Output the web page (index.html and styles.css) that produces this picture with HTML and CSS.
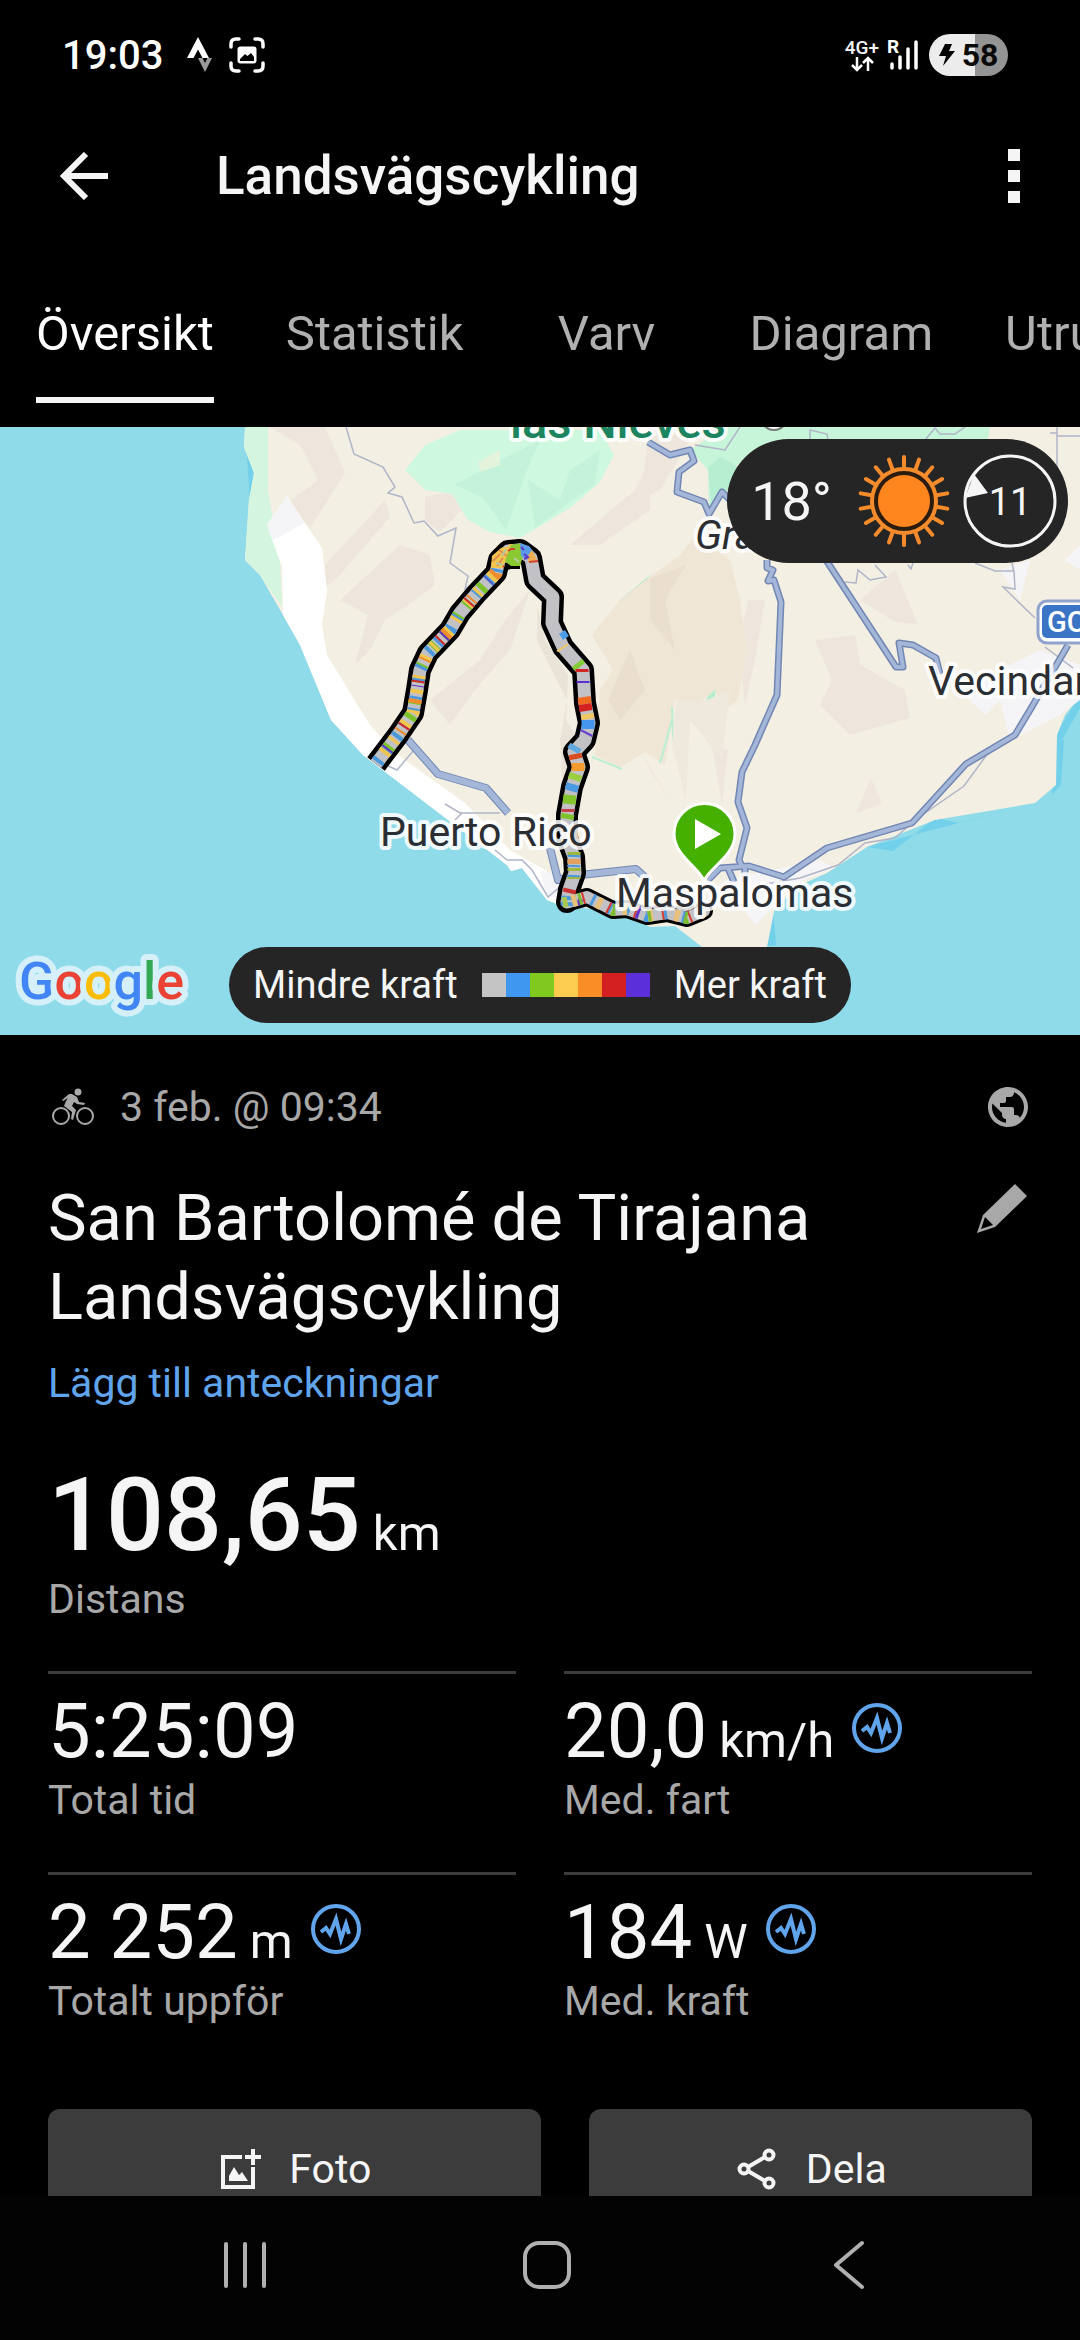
FILE: index.html
```html
<!DOCTYPE html>
<html lang="sv">
<head>
    <meta charset="UTF-8">
    <meta name="viewport" content="width=device-width, initial-scale=1.0">
    <title>Landsvägscykling</title>
    <link rel="stylesheet" href="styles.css">
</head>
<body>
    <div class="status-bar">
        <div class="status-left">
            <span class="clock">19:03</span>
            <svg width="26" height="36" viewBox="0 0 26 36">
                <path d="M11 0 L22 21 H15.500 L11 12.500 L6.500 21 H0 Z" fill="#fff"/>
                <path d="M11 21 H15.500 L18 26 L20.500 21 H25 L18 35 Z" fill="#999"/>
            </svg>
            <svg class="capture-icon" width="36" height="36" viewBox="0 0 36 36">
                <path d="M2 10 V7 Q2 2 7 2 H10 M26 2 H29 Q34 2 34 7 V10 M34 26 V29 Q34 34 29 34 H26 M10 34 H7 Q2 34 2 29 V26" fill="none" stroke="#fff" stroke-width="3.500" stroke-linecap="round"/>
                <rect x="8.500" y="9.500" width="19" height="17" rx="3" fill="#fff"/>
                <path d="M11 24 V22 L16 17 L18.500 19 L22 16 L25 20 V24 Z" fill="#000"/>
            </svg>
        </div>
        <div class="status-right">
            <div class="network">
                <span>4G+</span>
                <svg width="24" height="16" viewBox="0 0 24 16">
                    <path d="M7 1 V14 M2 9 L7 14 L12 9 M18 15 V2 M13 7 L18 2 L23 7" fill="none" stroke="#fff" stroke-width="2.500"/>
                </svg>
            </div>
            <svg class="signal" width="32" height="32" viewBox="0 0 32 32">
                <text x="0" y="14" class="roaming">R</text>
                <path d="M5 25 V29 M13 18 V29 M21 10 V29 M29 3 V29" stroke="#fff" stroke-width="3.500" stroke-linecap="round"/>
            </svg>
            <div class="battery">
                <svg width="16" height="22" viewBox="0 0 16 22">
                    <path d="M6 0 H13 L10 7 H16 L4 22 L7 12 H0 Z" fill="#000"/>
                </svg>
                <span>58</span>
            </div>
        </div>
    </div>

    <header class="app-bar">
        <button class="icon-button" aria-label="Tillbaka">
            <svg width="48" height="48" viewBox="0 0 48 48">
                <path d="M48 24 H4 M26 2 L4 24 L26 46" fill="none" stroke="#f5f5f5" stroke-width="6"/>
            </svg>
        </button>
        <h1>Landsvägscykling</h1>
        <button class="icon-button" aria-label="Mer">
            <svg width="12" height="54" viewBox="0 0 12 54" fill="#f5f5f5">
                <rect width="12" height="12"/>
                <rect y="21" width="12" height="12"/>
                <rect y="42" width="12" height="12"/>
            </svg>
        </button>
    </header>

    <nav class="tabs">
        <a href="#oversikt" class="active">Översikt</a>
        <a href="#statistik">Statistik</a>
        <a href="#varv">Varv</a>
        <a href="#diagram">Diagram</a>
        <a href="#utrustning">Utrustning</a>
    </nav>

    <main>
        <section class="map">
            <svg class="map-canvas" viewBox="0 427 1080 608">
                <defs>
                    <path id="climb" d="M376 764 L398 735 L413 713 L417 690 L420 670 L428 653 L450 630 L460 613 L477 593 L496 573 L499 560 L508 551 L520 550"/>
                    <path id="descent" d="M520 550 L531 558 L535 580 L553 597 L552 623 L563 647 L583 670 L585 703 L589 723 L585 740 L574 752 L579 767 L572 787 L567 815 L567 838 L574 857 L575 873 L569 890 L567 902"/>
                    <path id="coast" d="M569 902 L587 897 L613 910 L627 909 L647 916 L667 913 L687 918 L704 911"/>
                </defs>
                <rect y="427" width="1080" height="608" fill="#8fdbea"/>

                <!-- shallow water -->
                <path d="M246 440 L255 470 L250 505 Z M867 847 L893 851 L935 818 L960 823 L1035 803 Z M1056 740 H1064 L1061 785 L1052 795 Z M773 905 L776 945 L767 946 Z M1080 695 L1052 740 H1062 L1080 708 Z" fill="#72d0ea"/>

                <!-- island -->
                <path d="M245 427 L244 447 L254 473 L249 500 L245 560 L260 575 L283 615 L300 645 L331 720 L363 755 L507 865 L511 871 L522 868 L547 900 L560 905 L625 913 L650 927 L675 926 L702 947 H767 L775 907 L807 882 L827 873 L867 847 L935 820 L1035 803 L1056 785 L1057 735 L1065 715 L1077 700 L1080 699 V427 Z" fill="#f4efe3"/>

                <!-- hill shading -->
                <g fill="#ede5dc" opacity="0.8">
                    <path d="M270 427 H325 L345 473 L310 528 L285 505 L318 480 L300 445 Z"/>
                    <path d="M325 565 L385 500 L390 517 L340 575 L322 590 Z"/>
                    <path d="M340 600 L400 545 L430 555 L435 585 L415 600 L385 620 L370 650 L355 665 L368 615 Z"/>
                    <path d="M425 497 L450 492 L462 510 L440 532 L425 520 Z"/>
                    <path d="M570 545 L635 490 L650 460 V510 L600 545 Z"/>
                    <path d="M430 700 L480 660 L505 620 L530 590 L510 650 L475 690 L450 725 Z"/>
                    <path d="M815 640 L855 635 L860 665 L905 690 L910 718 L850 735 L820 705 L832 680 Z"/>
                    <path d="M860 600 L895 570 L918 624 L895 622 Z"/>
                    <path d="M856 813 L871 778 L882 804 Z"/>
                    <path d="M748 600 L765 600 L755 660 L745 705 L738 650 Z"/>
                    <path d="M640 750 L670 800 L650 770 Z M712 745 L728 750 L722 805 Z"/>
                    <path d="M650 427 L690 440 L660 490 L640 500 Z"/>
                </g>
                <path d="M537 605 L545 640 L568 675 L566 720 L578 740 L565 830 L560 740 L567 700 L537 640 Z" fill="#e9e3d8"/>

                <!-- parks and forest -->
                <path d="M245 427 H268 L268 490 L280 560 L282 607 L260 575 L245 560 L249 500 L254 473 L244 447 Z" fill="#d4f6e0"/>
                <path d="M405 470 L425 445 L460 430 H600 L614 455 L600 482 L570 508 L520 538 L490 532 L468 520 L452 494 L425 490 Z" fill="#cff8e1"/>
                <path d="M455 485 L500 460 L540 440 L525 475 L506 530 L483 498 Z M528 480 L560 500 L570 470 L600 450 L595 484 L535 528 Z" fill="#bdeed6" opacity="0.6"/>
                <path d="M478 462 L500 450 L500 465 L480 472 Z" fill="#e4f3dc"/>
                <path d="M690 450 L725 427 H990 L985 455 L730 465 L725 490 L709 510 L708 470 Z" fill="#c6f5da"/>
                <path d="M708 468 L720 457 L745 470 L726 492 L712 512 Z" fill="#b7edd0"/>
                <path d="M620 600 L650 575 L640 592 L615 610 L600 640 Z M670 695 L690 688 L692 693 L672 697 Z M706 700 L717 680 L714 706 Z" fill="#b5edce"/>
                <path d="M600 625 L620 600 L652 575 L680 555 L695 536 L730 560 L740 600 L747 650 L738 700 L725 710 L715 690 L700 703 L675 700 L665 765 L645 752 L620 768 L595 755 L600 690 L613 670 L592 635 Z" fill="#f0e6d6"/>
                <path d="M650 578 L686 565 L665 600 L675 650 L650 620 Z M608 700 L630 650 L645 690 L620 720 Z" fill="#eadfce"/>
                <path d="M592 757 L622 769 M672 707 L673 740 M660 763 L672 720" stroke="#b9efd2" stroke-width="2" fill="none"/>
                <path d="M676 700 L700 703 L730 690 L722 760 L690 720 L686 800 L672 745 Z" fill="#efe8dd"/>

                <!-- towns -->
                <path d="M287 496 L322 548 L327 590 L322 625 L327 655 L370 725 L398 755 L465 803 L510 850 L545 870 L575 895 L560 905 L547 900 L522 868 L511 871 L507 865 L363 755 L331 720 L300 645 L283 615 L282 567 L267 525 Z" fill="#fff"/>
                <path d="M287 496 L305 523 L273 540 L267 525 Z M540 870 L575 880 L570 900 L547 896 Z" fill="#f5f5f8"/>
                <path d="M725 880 L820 860 L835 868 L790 885 L775 905 L756 925 L740 905 Z M960 690 L1040 650 L1080 665 V700 L1060 715 L1010 740 L1000 700 L985 715 Z M1065 560 L1080 545 V570 Z M1000 570 L1030 560 L1020 600 Z" fill="#f5f4f6"/>

                <!-- minor roads -->
                <g fill="none" stroke="#b0b5c8" stroke-width="1.500">
                    <path d="M346 427 L354 454 L383 467 L395 487 L388 493 L402 497 L414 523 L424 521 L438 536 L456 528 L450 563 L468 576 L465 589 L474 584"/>
                    <path d="M414 750 L397 770 L388 766 M445 804 L460 813 H500 M462 813 L455 820 M495 850 L507 860 H522 L532 870 L548 897 L562 885"/>
                    <path d="M740 427 L725 450 L695 445 M810 440 V430 L827 434 L829 446 M925 440 L935 428 L940 434 H955 L965 427 M1057 427 V475 M1050 433 H1057 M1057 436 H1080"/>
                    <path d="M845 582 L856 583 L858 570 L870 580 L886 577 L875 565 M908 565 L911 569 L913 563 M975 563 L995 571 H1014 L1015 589 L1003 587 L1035 618 M1012 563 L1014 572 M1045 647 L1073 668"/>
                    <path d="M766 884 L800 878 L838 865 L865 843 L895 838 L915 820 L964 786 L988 753"/>
                </g>

                <!-- main roads -->
                <g fill="none" stroke="#7187b3" stroke-width="7" stroke-linejoin="round">
                    <path d="M648 442 L670 455 L690 450 L694 461 L679 472 L677 492 L704 502 L709 514 L722 492 L730 500"/>
                    <path d="M767 560 V568 L773 570 L768 581 L774 580 L781 602 L777 695 L755 745 L742 772 L738 802 L747 828 L739 860 L742 866"/>
                    <path d="M826 560 L896 667 L903 667 L899 643 L913 645 L936 658 L940 674"/>
                    <path d="M1068 645 L1030 710 L1015 735 L966 764 L912 823 L827 848 L784 877 L749 866 L720 868 L708 880"/>
                    <path d="M728 868 L734 882 M745 866 V882"/>
                    <path d="M408 740 L438 774 L486 788 L508 813" stroke-width="8"/>
                    <path d="M550 848 L558 880 L580 875 L636 869 L648 880" stroke-width="8"/>
                </g>
                <g fill="none" stroke="#a5b7d8" stroke-width="4" stroke-linejoin="round">
                    <path d="M648 442 L670 455 L690 450 L694 461 L679 472 L677 492 L704 502 L709 514 L722 492 L730 500"/>
                    <path d="M767 560 V568 L773 570 L768 581 L774 580 L781 602 L777 695 L755 745 L742 772 L738 802 L747 828 L739 860 L742 866"/>
                    <path d="M826 560 L896 667 L903 667 L899 643 L913 645 L936 658 L940 674"/>
                    <path d="M1068 645 L1030 710 L1015 735 L966 764 L912 823 L827 848 L784 877 L749 866 L720 868 L708 880"/>
                    <path d="M728 868 L734 882 M745 866 V882"/>
                    <path d="M408 740 L438 774 L486 788 L508 813" stroke-width="6"/>
                    <path d="M550 848 L558 880 L580 875 L636 869 L648 880" stroke-width="6"/>
                </g>

                <!-- route coloured by power -->
                <g fill="none" stroke="#000" stroke-width="22" stroke-linejoin="round">
                    <use href="#climb"/>
                    <use href="#descent" stroke-linecap="round"/>
                    <use href="#coast" stroke-width="18" stroke-linecap="round"/>
                    <path d="M502 562 L510 560 L520 560" stroke-width="18"/>
                </g>
                <g fill="none" stroke="#c2c2c6" stroke-width="13" stroke-linejoin="round">
                    <use href="#climb"/>
                    <use href="#descent" stroke-linecap="round"/>
                    <use href="#coast" stroke-width="12" stroke-linecap="round"/>
                </g>
                <g fill="none" stroke-width="13" stroke-linejoin="round">
                    <use href="#climb" stroke="#7cc22a" stroke-dasharray="5 11 3 19" stroke-dashoffset="-18"/>
                    <use href="#climb" stroke="#4c98dc" stroke-dasharray="4 9 3 15" stroke-dashoffset="-2"/>
                    <use href="#climb" stroke="#f0c64e" stroke-dasharray="3 17 4 11" stroke-dashoffset="-28"/>
                    <use href="#climb" stroke="#f08c2c" stroke-dasharray="2 31 4 40" stroke-dashoffset="-40"/>
                    <use href="#climb" stroke="#d02828" stroke-dasharray="2 46" stroke-dashoffset="-46"/>
                    <use href="#climb" stroke="#6035c0" stroke-dasharray="1 57 2 70" stroke-dashoffset="-90"/>
                </g>
                <!-- switchbacks at the turning point -->
                <path d="M491 568 L492 556 L501 548 L512 546 L514 566 L505 562 L502 568 Z" fill="#f2c64a"/>
                <path d="M511 545 L521 543 L523 556 L520 566 L511 566 L505 561 Z" fill="#8ac932"/>
                <path d="M520 543 L529 546 L534 552 L527 560 L521 556 Z" fill="#5a9be6"/>
                <path d="M532 550 L538 562 L529 563 L527 557 Z" fill="#efaf50"/>
                <path d="M493 561 L500 554 M497 566 L503 558 M499 550 L507 556" stroke="#e08b58" stroke-width="2" fill="none"/>
                <path d="M496 563 L503 565 M506 549 L502 556 M514 558 L519 562" stroke="#b8c8a0" stroke-width="2" fill="none"/>
                <path d="M508 551 L511 549 L515 549 M529 562 L538 561" stroke="#d04438" stroke-width="2" fill="none"/>
                <path d="M524 554 L528 557 L524 559 M521 547 L524 550" stroke="#6035c0" stroke-width="2" fill="none"/>
                <g fill="none" stroke-width="13">
                    <path d="M562 632 L566 638" stroke="#4c9ce8" stroke-width="7"/>
                    <path d="M562 647 L568 656" stroke="#efc766" stroke-dasharray="2 20"/>
                    <path d="M577 663 L580 667" stroke="#84cc38"/>
                    <path d="M582 669 V672" stroke="#d42828"/>
                    <path d="M583 681 V683" stroke="#5c30d0"/>
                    <path d="M584 697 L585 704" stroke="#f06a20"/>
                    <path d="M585 704 L586 711" stroke="#d42222"/>
                    <path d="M587 714 L588 719" stroke="#f0c660"/>
                    <path d="M588 720 V729" stroke="#4497ec"/>
                    <path d="M587 732 L586 734" stroke="#6a40d0"/>
                    <path d="M576 746 L573 751" stroke="#62a8e0"/>
                    <path d="M575 754 L576 759" stroke="#d84c20"/>
                    <path d="M578 763 L578 771" stroke="#f59a2c"/>
                    <path d="M576 774 L574 780" stroke="#9cce40"/>
                    <path d="M573 784 L571 791" stroke="#4c9be2"/>
                    <path d="M570 795 L569 804" stroke="#84c42c"/>
                    <path d="M568 809 L568 812" stroke="#c8404c"/>
                    <path d="M568 814 L567 819" stroke="#7fc32c"/>
                    <path d="M574 852 L574 884" stroke="#a0b840" stroke-dasharray="3 5"/>
                    <path d="M574 855 L573 883" stroke="#4c98dc" stroke-dasharray="2 8"/>
                    <path d="M574 859 L574 864" stroke="#e4a060"/>
                    <path d="M570 889 L569 893" stroke="#cc3030"/>
                    <path d="M568 896 L567 907" stroke="#4c98dc" stroke-dasharray="4 2"/>
                    <path d="M564 897 L566 907" stroke="#a8c850" stroke-width="5"/>
                    <path d="M578 905 L581 899" stroke="#6035c8" stroke-width="5"/>
                </g>
                <g fill="none" stroke-width="12">
                    <use href="#coast" stroke="#4c98dc" stroke-dasharray="3 16" stroke-dashoffset="-24"/>
                    <use href="#coast" stroke="#e8c078" stroke-dasharray="5 22" stroke-dashoffset="-30"/>
                    <use href="#coast" stroke="#d43c30" stroke-dasharray="2 26" stroke-dashoffset="-42"/>
                    <use href="#coast" stroke="#7cbc30" stroke-dasharray="3 34" stroke-dashoffset="-47"/>
                    <use href="#coast" stroke="#6035c8" stroke-dasharray="3 100" stroke-dashoffset="-72"/>
                </g>

                <!-- place labels -->
                <g class="place">
                    <text x="510" y="438" class="park">las Nieves</text>
                    <text x="695" y="549" class="island">Gran Canaria</text>
                    <text x="928" y="695">Vecindario</text>
                    <text x="380" y="846">Puerto Rico</text>
                    <text x="616" y="907">Maspalomas</text>
                </g>
                <circle cx="774" cy="417" r="13" fill="#fff" stroke="#777" stroke-width="2"/>
                <rect x="1038" y="601" width="90" height="42" rx="9" fill="#fff" stroke="#8fa3cc" stroke-width="3"/>
                <rect x="1042" y="605" width="90" height="33" rx="5" fill="#3b74c4"/>
                <text x="1047" y="632" class="road-number">GC-1</text>

                <!-- start pin -->
                <path d="M704 881 C700 868 674 856 674 834 A30.500 30.500 0 0 1 735 834 C735 856 709 868 704 881 Z" fill="#46b000" stroke="#fff" stroke-width="3"/>
                <path d="M695 819 V849 L721 834 Z" fill="#fff"/>

                <!-- map provider -->
                <text x="19" y="999" class="provider"><tspan fill="#4285f4">G</tspan><tspan fill="#ea4335">o</tspan><tspan fill="#fbbc05">o</tspan><tspan fill="#4285f4">g</tspan><tspan fill="#34a853">l</tspan><tspan fill="#ea4335">e</tspan></text>
            </svg>

            <div class="weather">
                <span class="temperature">18°</span>
                <svg width="96" height="96" viewBox="-48 -48 96 96">
                    <g stroke="#f68b2c" stroke-width="4" stroke-linecap="round">
                        <path id="ray" d="M0 -33 V-44"/>
                        <use href="#ray" transform="rotate(20)"/>
                        <use href="#ray" transform="rotate(40)"/>
                        <use href="#ray" transform="rotate(60)"/>
                        <use href="#ray" transform="rotate(80)"/>
                        <use href="#ray" transform="rotate(100)"/>
                        <use href="#ray" transform="rotate(120)"/>
                        <use href="#ray" transform="rotate(140)"/>
                        <use href="#ray" transform="rotate(160)"/>
                        <use href="#ray" transform="rotate(180)"/>
                        <use href="#ray" transform="rotate(200)"/>
                        <use href="#ray" transform="rotate(220)"/>
                        <use href="#ray" transform="rotate(240)"/>
                        <use href="#ray" transform="rotate(260)"/>
                        <use href="#ray" transform="rotate(280)"/>
                        <use href="#ray" transform="rotate(300)"/>
                        <use href="#ray" transform="rotate(320)"/>
                        <use href="#ray" transform="rotate(340)"/>
                    </g>
                    <circle r="32" fill="#2b1c10" stroke="#f68b2c" stroke-width="4"/>
                    <circle r="26" fill="#ff861e"/>
                </svg>
                <svg class="wind" width="96" height="96" viewBox="-48 -48 96 96">
                    <circle r="45" fill="none" stroke="#f5f5f5" stroke-width="3"/>
                    <path d="M-36 -27 L-22 -8 L-45 -3 Z" fill="#f5f5f5"/>
                    <text x="0" y="14">11</text>
                </svg>
            </div>

            <div class="legend">
                <span>Mindre kraft</span>
                <div class="swatches">
                    <i class="gray"></i>
                    <i class="blue"></i>
                    <i class="green"></i>
                    <i class="yellow"></i>
                    <i class="orange"></i>
                    <i class="red"></i>
                    <i class="purple"></i>
                </div>
                <span>Mer kraft</span>
            </div>
        </section>

        <section class="summary">
            <div class="meta">
                <svg width="42" height="38" viewBox="0 0 42 38">
                    <g fill="none" stroke="#a8a8a8" stroke-width="2">
                        <circle cx="9" cy="28" r="8"/>
                        <circle cx="33" cy="28" r="8"/>
                    </g>
                    <circle cx="26" cy="4" r="3.500" fill="#a8a8a8"/>
                    <path d="M20 6 L25 9 L27 14 L33 15 L32 17 L25 16 L22 14 L20 18 L24 22 L21 32 L19 31 L20 24 L12 18 L14 13 L16 10 L11 13 L10 12 L17 6 Z" fill="#a8a8a8"/>
                </svg>
                <span>3 feb. @ 09:34</span>
                <svg class="globe" width="48" height="48" viewBox="0 0 24 24">
                    <path fill="#a8a8a8" d="M12 2C6.480 2 2 6.480 2 12s4.480 10 10 10 10-4.480 10-10S17.520 2 12 2zm-1 17.930c-3.950-.490-7-3.850-7-7.930 0-.620.080-1.210.210-1.790L9 15v1c0 1.100.900 2 2 2v1.930zm6.900-2.540c-.260-.810-1-1.390-1.900-1.390h-1v-3c0-.550-.450-1-1-1H8v-2h2c.550 0 1-.450 1-1V7h2c1.100 0 2-.900 2-2v-.410c2.930 1.190 5 4.060 5 7.410 0 2.080-.800 3.970-2.100 5.390z"/>
                </svg>
            </div>

            <div class="title-row">
                <h2>San Bartolomé de Tirajana Landsvägscykling</h2>
                <button class="edit" aria-label="Redigera">
                    <svg width="60" height="60" viewBox="0 0 60 60">
                        <path d="M43 5 L55 17 L23 48 L5 54 L11 36 Z" fill="#a8a8a8"/>
                        <path d="M13 38 L21 46 L9 50 Z" fill="#000"/>
                    </svg>
                </button>
            </div>
            <a class="notes-link" href="#anteckningar">Lägg till anteckningar</a>

            <div class="distance">
                <div class="distance-value">108,65<span class="unit"> km</span></div>
                <div class="label">Distans</div>
            </div>

            <div class="stats">
                <div class="stat">
                    <div class="value">5:25:09</div>
                    <div class="label">Total tid</div>
                </div>
                <div class="stat">
                    <div class="value">
                        <span>20,0<span class="unit"> km/h</span></span>
                        <button class="graph" aria-label="Visa diagram för fart">
                            <svg width="50" height="50" viewBox="0 0 50 50"><circle cx="25" cy="25" r="23"/><path d="M10 28 L15 24 L19 30 L25 15 L30 35 L35 20 L38 30"/></svg>
                        </button>
                    </div>
                    <div class="label">Med. fart</div>
                </div>
                <div class="stat">
                    <div class="value">
                        <span>2 252<span class="unit"> m</span></span>
                        <button class="graph" aria-label="Visa diagram för höjd">
                            <svg width="50" height="50" viewBox="0 0 50 50"><circle cx="25" cy="25" r="23"/><path d="M10 28 L15 24 L19 30 L25 15 L30 35 L35 20 L38 30"/></svg>
                        </button>
                    </div>
                    <div class="label">Totalt uppför</div>
                </div>
                <div class="stat">
                    <div class="value">
                        <span>184<span class="unit"> W</span></span>
                        <button class="graph" aria-label="Visa diagram för kraft">
                            <svg width="50" height="50" viewBox="0 0 50 50"><circle cx="25" cy="25" r="23"/><path d="M10 28 L15 24 L19 30 L25 15 L30 35 L35 20 L38 30"/></svg>
                        </button>
                    </div>
                    <div class="label">Med. kraft</div>
                </div>
            </div>

            <div class="actions">
                <button class="action photo">
                    <svg width="48" height="48" viewBox="0 0 48 48">
                        <path d="M25 12 H6 V42 H36 V22" fill="none" stroke="#f5f5f5" stroke-width="4"/>
                        <path d="M36 4 V20 M28 12 H44" stroke="#f5f5f5" stroke-width="4"/>
                        <path d="M12 36 V31 L17 22 L22 30 L25 27 L31 36 Z" fill="#f5f5f5"/>
                    </svg>
                    Foto
                </button>
                <button class="action share">
                    <svg width="48" height="48" viewBox="0 0 48 48" fill="none" stroke="#f5f5f5" stroke-width="4">
                        <circle cx="10" cy="24" r="4.500"/>
                        <circle cx="35" cy="10" r="4.500"/>
                        <circle cx="35" cy="38" r="4.500"/>
                        <path d="M14 22 L31 12 M14 26 L31 36"/>
                    </svg>
                    Dela
                </button>
            </div>
        </section>
    </main>

    <nav class="system-nav">
        <button aria-label="Senaste">
            <svg width="48" height="50" viewBox="0 0 48 50" stroke="#b0b0b0" stroke-width="4" stroke-linecap="round">
                <path d="M5 4 V46 M24 4 V46 M43 4 V46"/>
            </svg>
        </button>
        <button aria-label="Hem">
            <svg width="50" height="50" viewBox="0 0 50 50" fill="none" stroke="#b0b0b0" stroke-width="4">
                <rect x="3" y="3" width="44" height="44" rx="14"/>
            </svg>
        </button>
        <button aria-label="Bakåt">
            <svg width="48" height="50" viewBox="0 0 48 50" fill="none" stroke="#b0b0b0" stroke-width="4" stroke-linecap="round" stroke-linejoin="round">
                <path d="M37 3 L11 25 L37 47"/>
            </svg>
        </button>
    </nav>
</body>
</html>
```
FILE: styles.css
```css
:root {
    --background: #000000;
    --text: #f5f5f5;
    --muted: #a8a8a8;
    --link: #60a5ec;
    --panel: #252525;
    --line: #3c3c3c;
}

* {
    margin: 0;
    padding: 0;
    box-sizing: border-box;
    font-family: Roboto, 'Liberation Sans', sans-serif;
}

body {
    display: flex;
    flex-direction: column;
    height: 100vh;
    overflow: hidden;
    background-color: var(--background);
    color: var(--text);
}

svg {
    display: block;
    flex-shrink: 0;
}

button {
    border: none;
    background: none;
    color: inherit;
    cursor: pointer;
}

/* Status bar */
.status-bar {
    display: flex;
    justify-content: space-between;
    align-items: center;
    flex-shrink: 0;
    height: 110px;
    padding: 0 72px 0 62px;
}

.status-left,
.status-right {
    display: flex;
    align-items: center;
}

.clock {
    margin-right: 24px;
    color: #fff;
    font-size: 40px;
    font-weight: 500;
}

.capture-icon {
    margin-left: 16px;
}

.network {
    display: flex;
    flex-direction: column;
    align-items: center;
    margin-right: 8px;
    font-size: 19px;
    font-weight: 500;
    line-height: 17px;
}

.signal {
    overflow: visible;
}

.roaming {
    fill: #fff;
    font-size: 19px;
    font-weight: 700;
}

.battery {
    display: flex;
    justify-content: center;
    align-items: center;
    gap: 7px;
    width: 79px;
    height: 42px;
    margin-left: 10px;
    border-radius: 21px;
    background: linear-gradient(to right, #ececec 58%, #949494 58%);
    color: #0a0a0a;
    font-size: 32px;
    font-weight: 700;
}

/* App bar */
.app-bar {
    display: flex;
    align-items: center;
    flex-shrink: 0;
    height: 132px;
    padding: 0 60px;
}

.app-bar h1 {
    flex: 1;
    margin-left: 108px;
    font-size: 53px;
    font-weight: 500;
}

/* Tabs */
.tabs {
    display: flex;
    flex-shrink: 0;
    overflow: hidden;
    padding-bottom: 24px;
}

.tabs a {
    flex-shrink: 0;
    min-width: 142px;
    margin: 0 36px;
    padding: 64px 0 35px;
    border-bottom: 6px solid transparent;
    color: #b0b0b0;
    font-size: 49px;
    line-height: 56px;
    text-align: center;
    text-decoration: none;
}

.tabs a.active {
    border-color: #f5f5f5;
    color: #fff;
}

main {
    flex: 1;
    min-height: 0;
    overflow: hidden;
}

/* Map */
.map {
    position: relative;
}

.map-canvas {
    width: 100%;
    height: auto;
}

.place {
    fill: #2b2e33;
    stroke: #fff;
    stroke-width: 8px;
    stroke-linejoin: round;
    stroke-opacity: 0.85;
    paint-order: stroke;
    font-size: 41px;
}

.park {
    fill: #1c8560;
    font-size: 47px;
    font-weight: 500;
}

.island {
    font-style: italic;
}

.road-number {
    fill: #fff;
    font-size: 29px;
    font-weight: 500;
}

.provider {
    stroke: #d5f0f9;
    stroke-width: 12px;
    stroke-linejoin: round;
    paint-order: stroke;
    font-size: 52px;
    font-weight: 500;
}

.weather {
    position: absolute;
    top: 12px;
    right: 12px;
    display: flex;
    align-items: center;
    height: 124px;
    padding: 0 10px 0 24px;
    border-radius: 62px;
    background-color: var(--panel);
}

.temperature {
    margin-right: 24px;
    font-size: 54px;
}

.wind {
    margin-left: 10px;
}

.wind text {
    fill: var(--text);
    font-size: 38px;
    text-anchor: middle;
}

.legend {
    position: absolute;
    bottom: 12px;
    left: 50%;
    display: flex;
    align-items: center;
    gap: 24px;
    height: 76px;
    padding: 0 24px;
    border-radius: 38px;
    background-color: var(--panel);
    font-size: 38px;
    white-space: nowrap;
    transform: translateX(-50%);
}

.swatches {
    display: flex;
}

.swatches i {
    width: 24px;
    height: 24px;
}

.gray { background-color: #c4c4c4; }
.blue { background-color: #3f97f0; }
.green { background-color: #80c91e; }
.yellow { background-color: #fccc50; }
.orange { background-color: #fa8e26; }
.red { background-color: #d42020; }
.purple { background-color: #5b30d8; }

/* Activity summary */
.summary {
    padding: 0 48px;
}

.meta {
    display: flex;
    align-items: center;
    height: 144px;
    padding-left: 4px;
    color: var(--muted);
    font-size: 41px;
}

.meta span {
    margin-left: 26px;
}

.globe {
    margin-left: auto;
}

.title-row {
    display: flex;
    justify-content: space-between;
    align-items: flex-start;
}

.title-row h2 {
    max-width: 800px;
    font-size: 65px;
    font-weight: 400;
    line-height: 79px;
}

.notes-link {
    display: block;
    margin-top: 18px;
    color: var(--link);
    font-size: 41px;
    line-height: 56px;
    text-decoration: none;
}

.distance {
    margin-top: 44px;
}

.distance-value {
    font-size: 102px;
    font-weight: 500;
    line-height: 120px;
}

.unit {
    font-size: 49px;
    font-weight: 400;
    line-height: 48px;
}

.label {
    color: var(--muted);
    font-size: 41px;
    line-height: 48px;
}

.stats {
    display: grid;
    grid-template-columns: 1fr 1fr;
    gap: 48px;
    margin-top: 48px;
}

.stat {
    border-top: 3px solid var(--line);
    padding-top: 12px;
}

.value {
    display: flex;
    align-items: center;
    gap: 18px;
    height: 90px;
    font-size: 76px;
    line-height: 90px;
}

.graph {
    margin-bottom: 6px;
}

.graph svg {
    fill: none;
    stroke: var(--link);
    stroke-width: 4px;
}

.actions {
    display: flex;
    gap: 48px;
    margin-top: 84px;
}

.action {
    display: flex;
    justify-content: center;
    align-items: center;
    gap: 24px;
    height: 120px;
    border-radius: 12px;
    background-color: var(--line);
    font-size: 41px;
}

.photo {
    flex: 10;
}

.share {
    flex: 9;
}

/* System navigation */
.system-nav {
    display: flex;
    align-items: center;
    flex-shrink: 0;
    height: 144px;
    padding: 0 80px 6px 94px;
    background-color: #030303;
}

.system-nav button {
    display: flex;
    flex: 1;
    justify-content: center;
}
```
